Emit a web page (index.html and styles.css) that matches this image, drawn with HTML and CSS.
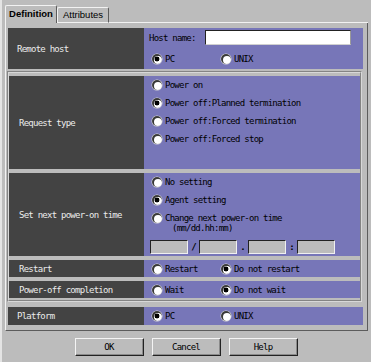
FILE: index.html
```html
<!DOCTYPE html>
<html>
<head>
    <title>Power Control</title>
    <link rel="stylesheet" href="styles.css">
</head>
<body>
    <div class="dialog">
        <div class="tabs">
            <div class="tab tab-active">Definition</div>
            <div class="tab">Attributes</div>
            <div class="tab-fill"></div>
        </div>
        <div class="panel">
            <div class="row row-outer row-remote">
                <div class="label">Remote host</div>
                <div class="value value-remote">
                    <div class="host-line">
                        <span class="host-label">Host name:</span>
                        <span class="host-input"></span>
                    </div>
                    <div class="pair pair-remote">
                        <span class="option option-first"><i class="radio checked"></i>PC</span>
                        <span class="option"><i class="radio"></i>UNIX</span>
                    </div>
                </div>
            </div>

            <div class="frame">
                <div class="row row-request">
                    <div class="label">Request type</div>
                    <div class="value value-list">
                        <div class="option"><i class="radio"></i>Power on</div>
                        <div class="option"><i class="radio checked"></i>Power off:Planned termination</div>
                        <div class="option"><i class="radio"></i>Power off:Forced termination</div>
                        <div class="option"><i class="radio"></i>Power off:Forced stop</div>
                    </div>
                </div>
                <div class="row row-next">
                    <div class="label">Set next power-on time</div>
                    <div class="value value-list">
                        <div class="option"><i class="radio"></i>No setting</div>
                        <div class="option"><i class="radio checked"></i>Agent setting</div>
                        <div class="option option-two"><i class="radio"></i>Change next power-on time</div>
                        <div class="format">(mm/dd.hh:mm)</div>
                        <div class="time-line">
                            <span class="time-input"></span><span class="sep">/</span><span class="time-input"></span><span class="sep">.</span><span class="time-input"></span><span class="sep">:</span><span class="time-input"></span>
                        </div>
                    </div>
                </div>
                <div class="row row-small">
                    <div class="label">Restart</div>
                    <div class="value pair">
                        <span class="option option-first"><i class="radio"></i>Restart</span>
                        <span class="option"><i class="radio checked"></i>Do not restart</span>
                    </div>
                </div>
                <div class="row row-small">
                    <div class="label">Power-off completion</div>
                    <div class="value pair">
                        <span class="option option-first"><i class="radio"></i>Wait</span>
                        <span class="option"><i class="radio checked"></i>Do not wait</span>
                    </div>
                </div>
            </div>

            <div class="row row-outer row-platform">
                <div class="label">Platform</div>
                <div class="value pair">
                    <span class="option option-first"><i class="radio checked"></i>PC</span>
                    <span class="option"><i class="radio"></i>UNIX</span>
                </div>
            </div>
        </div>

        <div class="buttons">
            <button type="button">OK</button>
            <button type="button">Cancel</button>
            <button type="button">Help</button>
        </div>
    </div>
</body>
</html>
```

FILE: styles.css
```css
* {
    margin: 0;
    padding: 0;
    box-sizing: border-box;
}

html,
body {
    width: 371px;
    height: 362px;
    overflow: hidden;
}

body {
    background-color: #bcbcbc;
    font-family: "DejaVu Sans Mono", "Liberation Mono", monospace;
    font-size: 9px;
    letter-spacing: -0.75px;
    color: #000;
}

.dialog {
    height: 362px;
    padding: 5px 0 0 5px;
    border-left: 2px solid #e4e4e4;
}

/* tabs */
.tabs {
    display: flex;
    align-items: flex-end;
    width: 363px;
    margin-left: -2px;
    height: 18px;
}

.tab {
    width: 52px;
    height: 16px;
    font-family: "Liberation Sans", Arial, sans-serif;
    font-size: 9.5px;
    letter-spacing: 0;
    text-align: center;
    line-height: 14px;
    border-top: 1px solid #f2f2f2;
    border-left: 1px solid #f2f2f2;
    border-right: 1px solid #5c5c5c;
    border-bottom: 1px solid #f2f2f2;
    border-radius: 2px 2px 0 0;
}

.tab-active {
    height: 18px;
    font-weight: bold;
    line-height: 16px;
    border-bottom: 0;
}

.tab-fill {
    flex: 1;
    border-bottom: 1px solid #f2f2f2;
}

/* main panel */
.panel {
    width: 363px;
    margin-left: -2px;
    padding: 5px 3px 5px 1px;
    border-left: 1px solid #f2f2f2;
    border-right: 1px solid #5c5c5c;
    border-bottom: 1px solid #5c5c5c;
}

.row {
    display: flex;
}

.row-outer {
    margin: 0 1px;
}

.label {
    width: 135px;
    display: flex;
    align-items: center;
    padding-left: 10px;
    background-color: #434343;
    color: #ececec;
}

.row-outer .label {
    width: 136px;
    padding-left: 9px;
}

.value {
    flex: 1;
    background-color: #7776b8;
    padding-left: 8px;
}

.row-remote {
    height: 41px;
}

.value-remote {
    padding: 2px 0 0 5px;
}

.host-line {
    display: flex;
    align-items: center;
    height: 15px;
}

.host-label {
    width: 56px;
}

.host-input {
    width: 146px;
    height: 15px;
    background-color: #fff;
    border-top: 1px solid #222;
    border-left: 1px solid #222;
    border-right: 1px solid #9a9a9a;
    border-bottom: 1px solid #d0d0d0;
}

.pair {
    display: flex;
    align-items: center;
}

.pair-remote {
    height: 16px;
    margin: 6px 0 0 3px;
}

.option {
    display: flex;
    align-items: center;
    height: 18px;
}

.option-first {
    width: 69px;
}

.radio {
    display: inline-block;
    width: 10px;
    height: 10px;
    margin-right: 3px;
    border-radius: 50%;
    background-color: #fff;
    box-shadow: inset 1px 1px 0 1px #3a3a3a, 0 0 0 0.5px #dcdcdc;
}

.radio.checked {
    background: radial-gradient(circle, #000 0, #000 2.2px, #fff 2.7px);
}

/* grouped section */
.frame {
    display: flex;
    flex-direction: column;
    gap: 4px;
    margin: 2px 2px 0 0;
    padding: 3px 0 2px 0;
    border: 2px groove #d8d8d8;
}

.row-request {
    height: 93px;
}

.row-next {
    height: 83px;
}

.row-small {
    height: 17px;
}

.option-two {
    height: 14px;
    padding-top: 3px;
}

.format {
    height: 11px;
    line-height: 11px;
    padding-left: 20px;
}

.time-line {
    display: flex;
    align-items: center;
    margin: 6px 0 0 -2px;
}

.time-input {
    width: 38px;
    height: 14px;
    background-color: #bcbcbc;
    border-top: 1px solid #222;
    border-left: 1px solid #222;
    border-right: 1px solid #f0f0f0;
    border-bottom: 1px solid #f0f0f0;
}

.sep {
    width: 11px;
    text-align: center;
    font-weight: bold;
}

.row-platform {
    height: 18px;
    margin-top: 5px;
}

/* buttons */
.buttons {
    display: flex;
    justify-content: center;
    gap: 8px;
    margin: 7px 0 0 -6px;
}

.buttons button {
    width: 69px;
    height: 18px;
    background-color: #bcbcbc;
    font-family: inherit;
    font-size: 9px;
    letter-spacing: -0.75px;
    color: #000;
    border-top: 1px solid #f4f4f4;
    border-left: 1px solid #f4f4f4;
    border-right: 1px solid #222;
    border-bottom: 1px solid #222;
    box-shadow: inset -1px -1px 0 #8a8a8a;
}
```
